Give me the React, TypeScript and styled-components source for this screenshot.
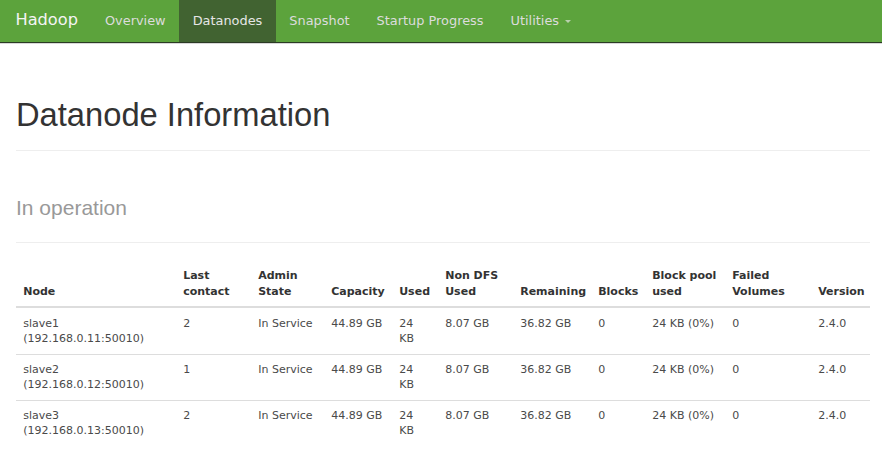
import React from "react";
import styled, { createGlobalStyle } from "styled-components";

const Global = createGlobalStyle`
  html, body { margin: 0; padding: 0; background: #fff; }
  body { font-family: "DejaVu Sans", sans-serif; color: #333; }
  * { box-sizing: border-box; }
`;

const NavBar = styled.nav`
  display: flex;
  align-items: stretch;
  height: 43px;
  background: #5ca33c;
  border-bottom: 1px solid #2b3a24;
  box-shadow: 0 1px 0 #d8d8d8;
  padding-left: 2px;
`;

const Brand = styled.a`
  display: flex;
  align-items: center;
  padding: 0 13.5px;
  font-size: 16.2px;
  color: #f4f4f4;
  text-decoration: none;
  line-height: 18px;
  padding-bottom: 2px;
`;

const NavList = styled.ul`
  display: flex;
  margin: 0;
  padding: 0;
  list-style: none;
`;

const NavLink = styled.a<{ $active?: boolean }>`
  display: flex;
  align-items: center;
  height: 42px;
  padding: 0 13.5px 1px;
  font-size: 12.9px;
  line-height: 18px;
  color: ${(p) => (p.$active ? "#e6e6e6" : "#dcdcdc")};
  background: ${(p) => (p.$active ? "#416331" : "transparent")};
  text-decoration: none;
`;

const Caret = styled.span`
  display: inline-block;
  width: 0;
  height: 0;
  margin-left: 6px;
  margin-top: 2px;
  border-top: 3.6px solid #b9cfae;
  border-left: 3.6px solid transparent;
  border-right: 3.6px solid transparent;
`;

const Page = styled.main`
  padding: 0 12px 0 16px;
`;

const PageHeader = styled.div<{ $top: number }>`
  margin-top: ${(p) => p.$top}px;
  padding-bottom: 8px;
  border-bottom: 1px solid #eee;
  margin-bottom: 18px;
`;

const Title = styled.h1`
  margin: 0;
  font-family: "Liberation Sans", Arial, sans-serif;
  font-weight: 400;
  font-size: 32.7px;
  line-height: 35.6px;
  color: #333;
  padding-bottom: 9px;
`;

const Small = styled.small`
  font-size: 21px;
  color: #999;
`;

const Table = styled.table`
  width: 100%;
  table-layout: fixed;
  border-collapse: collapse;
  font-size: 11px;
  line-height: 15.4px;
`;

const Th = styled.th<{ $w: number }>`
  width: ${(p) => p.$w}px;
  text-align: left;
  vertical-align: bottom;
  padding: 7.2px;
  font-weight: 700;
  color: #333;
  border-bottom: 2px solid #ddd;
`;

const Td = styled.td`
  vertical-align: top;
  padding: 7.2px;
  color: #4a4a4a;
  border-top: 1px solid #ddd;
`;

const columns: [string, number][] = [
  ["Node", 160],
  ["Last contact", 75],
  ["Admin State", 73],
  ["Capacity", 68],
  ["Used", 46],
  ["Non DFS Used", 75],
  ["Remaining", 78],
  ["Blocks", 54],
  ["Block pool used", 80],
  ["Failed Volumes", 86],
  ["Version", 59],
];

const rows = [
  ["slave1", "192.168.0.11:50010", "2"],
  ["slave2", "192.168.0.12:50010", "1"],
  ["slave3", "192.168.0.13:50010", "2"],
];

export default function App() {
  return (
    <>
      <Global />
      <NavBar>
        <Brand href="#">Hadoop</Brand>
        <NavList>
          <li><NavLink href="#">Overview</NavLink></li>
          <li><NavLink href="#" $active>Datanodes</NavLink></li>
          <li><NavLink href="#">Snapshot</NavLink></li>
          <li><NavLink href="#">Startup Progress</NavLink></li>
          <li>
            <NavLink href="#">
              Utilities<Caret />
            </NavLink>
          </li>
        </NavList>
      </NavBar>
      <Page>
        <PageHeader $top={54}>
          <Title>Datanode Information</Title>
        </PageHeader>
        <PageHeader $top={35}>
          <Title>
            <Small>In operation</Small>
          </Title>
        </PageHeader>
        <Table>
          <thead>
            <tr>
              {columns.map(([name, w]) => (
                <Th key={name} $w={w}>{name}</Th>
              ))}
            </tr>
          </thead>
          <tbody>
            {rows.map(([host, addr, last]) => (
              <tr key={host}>
                <Td>
                  {host}
                  <br />({addr})
                </Td>
                <Td>{last}</Td>
                <Td>In Service</Td>
                <Td>44.89 GB</Td>
                <Td>24 KB</Td>
                <Td>8.07 GB</Td>
                <Td>36.82 GB</Td>
                <Td>0</Td>
                <Td>24 KB (0%)</Td>
                <Td>0</Td>
                <Td>2.4.0</Td>
              </tr>
            ))}
          </tbody>
        </Table>
      </Page>
    </>
  );
}
